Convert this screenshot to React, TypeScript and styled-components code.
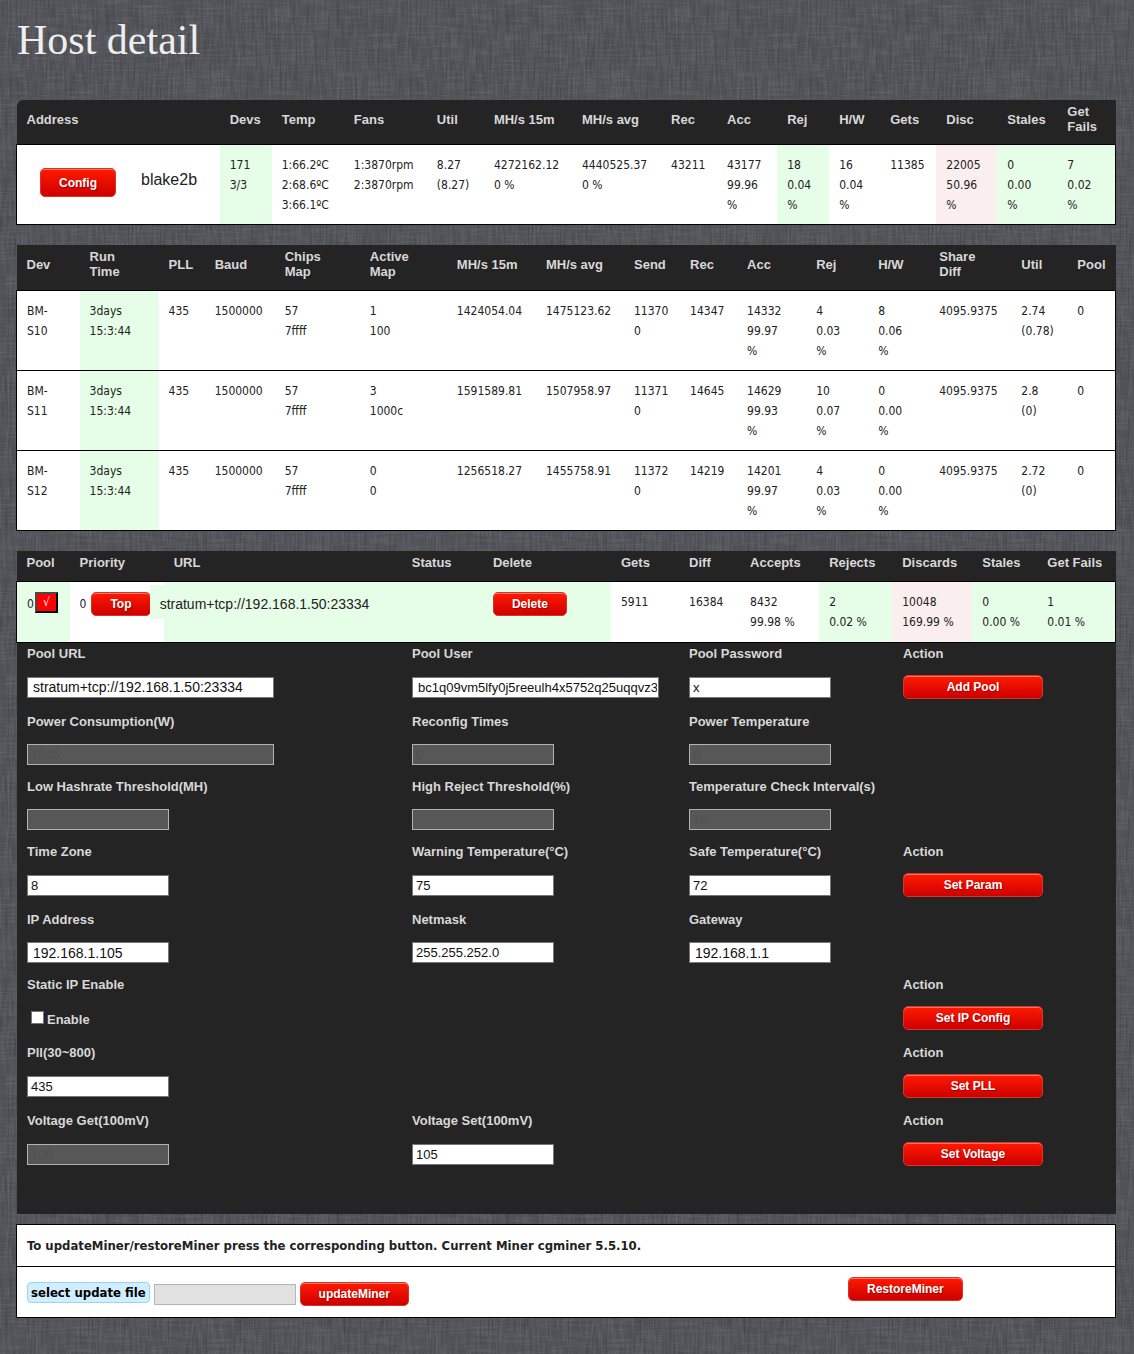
import React from "react";
import styled, { createGlobalStyle } from "styled-components";

const sans = `"Liberation Sans", Arial, sans-serif`;
const text = `"DejaVu Sans Condensed", Tahoma, "DejaVu Sans", sans-serif`;

const linen = encodeURIComponent(
  `<svg xmlns='http://www.w3.org/2000/svg' width='400' height='400'>
    <filter id='h' x='0' y='0' width='100%' height='100%'>
      <feTurbulence type='fractalNoise' baseFrequency='0.03 0.5' numOctaves='3' seed='4' stitchTiles='stitch'/>
      <feColorMatrix values='0 0 0 0 1  0 0 0 0 1  0 0 0 0 1  1.3 0 0 0 -0.55'/>
    </filter>
    <filter id='v' x='0' y='0' width='100%' height='100%'>
      <feTurbulence type='fractalNoise' baseFrequency='0.5 0.03' numOctaves='3' seed='9' stitchTiles='stitch'/>
      <feColorMatrix values='0 0 0 0 0  0 0 0 0 0  0 0 0 0 0  1.6 0 0 0 -0.6'/>
    </filter>
    <filter id='w' x='0' y='0' width='100%' height='100%'>
      <feTurbulence type='fractalNoise' baseFrequency='0.5 0.04' numOctaves='2' seed='21' stitchTiles='stitch'/>
      <feColorMatrix values='0 0 0 0 1  0 0 0 0 1  0 0 0 0 1  1.2 0 0 0 -0.52'/>
    </filter>
    <rect width='400' height='400' fill='#535459'/>
    <rect width='400' height='400' filter='url(#h)' opacity='0.13'/>
    <rect width='400' height='400' filter='url(#v)' opacity='0.22'/>
    <rect width='400' height='400' filter='url(#w)' opacity='0.13'/>
  </svg>`
).replace(/'/g, "%27");

const GlobalStyle = createGlobalStyle`
  *, *::before, *::after { box-sizing: border-box; }
  html { background: #505257 url("data:image/svg+xml,${linen}"); }
  body { margin: 0; font: 12px/20px ${text}; color: #222; }
`;

const Page = styled.main`
  padding: 16px 18px 36px 16px;
`;

const Title = styled.h1`
  margin: 0 0 36px 1px;
  font: 400 42px/48px "Liberation Serif", Georgia, serif;
  color: #eee;
`;

const DataTable = styled.table<{ $rounded?: boolean; $last?: boolean }>`
  width: 100%;
  table-layout: fixed;
  border-collapse: collapse;
  margin-bottom: ${(p) => (p.$last ? 0 : 20)}px;

  th:first-child {
    border-top-left-radius: ${(p) => (p.$rounded ? 6 : 0)}px;
  }
`;

const HeadCell = styled.th<{ $height: number }>`
  height: ${(p) => p.$height}px;
  padding: 4px 10px 10px;
  background: #242424;
  color: #d8d8d8;
  font: 700 13px/15px ${sans};
  text-align: left;
  vertical-align: middle;
  white-space: pre;
`;

type Tone = "white" | "green" | "pink";
const tones: Record<Tone, string> = { white: "#fff", green: "#e6fde7", pink: "#faeeee" };

const Cell = styled.td<{ $tone?: Tone }>`
  height: 80px;
  padding: 10px 10px 9px;
  background: ${(p) => tones[p.$tone ?? "white"]};
  border: solid #000;
  border-width: 1px 0;
  vertical-align: top;
  white-space: pre;

  &:first-child { border-left-width: 1px; }
  &:last-child { border-right-width: 1px; }
`;

const PoolCell = styled(Cell)`
  height: 61px;
`;

const RedButton = styled.button<{ $size?: "wide" | "tall" }>`
  flex: none;
  width: ${(p) => (p.$size === "wide" ? "140px" : "auto")};
  height: ${(p) => (p.$size === "tall" ? 29 : 24)}px;
  padding: 0 18px;
  border: 1px solid #d83526;
  border-radius: 5px;
  background: linear-gradient(#ff1a00, #ce0000);
  box-shadow: inset 0 1px 0 #ff7466;
  color: #fff;
  font: 700 12px/20px ${sans};
  text-shadow: 1px 1px 1px rgba(90, 0, 0, 0.5);
  white-space: nowrap;
  cursor: pointer;
`;

const Address = styled.div`
  display: flex;
  align-items: center;
  gap: 25px;
  padding: 13px 0 0 13px;
`;

const HostName = styled.span`
  padding-bottom: 5px;
  font: 400 16px/20px ${sans};
`;

const InlineGroup = styled.div<{ $gap?: number }>`
  display: flex;
  align-items: center;
  gap: ${(p) => p.$gap ?? 1}px;
  height: 24px;
`;

const CheckButton = styled.button`
  flex: none;
  width: 23px;
  height: 21px;
  margin-bottom: 3px;
  padding: 0;
  border: 2px solid;
  border-color: #4a4a4a #000 #000 #4a4a4a;
  background: #f00;
  color: #fff;
  font: 400 12px/17px ${text};
  cursor: pointer;
`;

const PoolAddress = styled.div`
  position: relative;
  width: 240px;
  margin: -7px 0 0 -24px;
  padding: 9px 10px 5px;
  background: ${tones.green};
  font: 400 14px/20px ${sans};
`;

const Settings = styled.section`
  margin: 0 0 10px 1px;
  padding: 3px 0 33px 10px;
  background: #242424;
`;

const SettingRow = styled.div<{ $tall: boolean }>`
  display: grid;
  grid-template-columns: 385fr 277fr 214fr 213fr;
  padding-bottom: ${(p) => (p.$tall ? 15 : 14)}px;
`;

const Field = styled.div<{ $column?: number; $tall: boolean }>`
  grid-column: ${(p) => p.$column ?? "auto"};
  min-width: 0;
  display: flex;
  flex-direction: column;
  gap: ${(p) => (p.$tall ? 14 : 15)}px;
`;

const FieldLabel = styled.label`
  color: #d8d8d8;
  font: 700 13px/15px ${sans};
  white-space: nowrap;
`;

const ControlBox = styled.div<{ $tall: boolean }>`
  display: flex;
  align-items: center;
  height: ${(p) => (p.$tall ? 24 : 21)}px;
`;

const TextBox = styled.input<{ $wide?: boolean; $indent?: boolean; $large?: boolean }>`
  width: ${(p) => (p.$wide ? 247 : 142)}px;
  height: 21px;
  padding: 0 1px 0 ${(p) => (p.$indent ? 5 : 3)}px;
  border: 1px solid #767676;
  border-radius: 0;
  background: #fff;
  color: #111;
  font: 400 ${(p) => (p.$large ? 14 : 13)}px/19px ${sans};

  &:disabled {
    border-color: #b2b2b2;
    background: #575757;
    color: #505050;
    opacity: 1;
  }
`;

const Tick = styled.label`
  display: flex;
  align-items: center;
  gap: 3px;
  padding: 3px 0 0 4px;
  color: #d8d8d8;
  font: 700 13px/15px ${sans};
`;

const TickBox = styled.input`
  appearance: none;
  width: 13px;
  height: 13px;
  margin: 0 0 4px;
  border: 1px solid #767676;
  background: #fff;

  &:checked { background: #c00; }
`;

const Update = styled.section`
  border: 1px solid #000;
  background: #fff;
`;

const Notice = styled.p`
  margin: 0;
  padding: 11px 10px 10px;
  border-bottom: 1px solid #000;
  font-size: 13px;
  font-weight: 700;
`;

const UpdateRow = styled.div`
  display: grid;
  grid-template-columns: 821fr 267fr;
  align-items: start;
  height: 50px;
  padding: 10px 0 0 10px;
`;

const UpdateControls = styled.div`
  display: flex;
  align-items: center;
  gap: 4px;
  padding-top: 5px;
`;

const FilePicker = styled.label`
  flex: none;
  height: 21px;
  margin-bottom: 3px;
  padding: 0 3px;
  border: 1px solid #99d3f5;
  border-radius: 4px;
  background: #d0eeff;
  color: #000;
  font: 700 13px/19px ${text};
  cursor: pointer;
`;

const HiddenFile = styled.input`
  position: absolute;
  width: 1px;
  height: 1px;
  opacity: 0;
`;

const FileName = styled(TextBox)`
  &:disabled {
    border-color: #b5b5b5;
    background: #e1e1e1;
  }
`;

type Column = [title: string, width: number, tone?: Tone];

const hostColumns: Column[] = [
  ["Address", 203], ["Devs", 52, "green"], ["Temp", 72], ["Fans", 83], ["Util", 57],
  ["MH/s 15m", 88], ["MH/s avg", 89], ["Rec", 56], ["Acc", 60], ["Rej", 52, "green"],
  ["H/W", 51], ["Gets", 56], ["Disc", 61, "pink"], ["Stales", 60, "green"], ["Get\nFails", 58, "green"],
];

const hostValues = [
  "171\n3/3", "1:66.2ºC\n2:68.6ºC\n3:66.1ºC", "1:3870rpm\n2:3870rpm", "8.27\n(8.27)",
  "4272162.12\n0 %", "4440525.37\n0 %", "43211", "43177\n99.96\n%", "18\n0.04\n%",
  "16\n0.04\n%", "11385", "22005\n50.96\n%", "0\n0.00\n%", "7\n0.02\n%",
];

const devColumns: Column[] = [
  ["Dev", 63], ["Run\nTime", 79, "green"], ["PLL", 46], ["Baud", 70], ["Chips\nMap", 85],
  ["Active\nMap", 87], ["MH/s 15m", 89], ["MH/s avg", 88], ["Send", 56], ["Rec", 57],
  ["Acc", 69], ["Rej", 62], ["H/W", 61], ["Share\nDiff", 82], ["Util", 56], ["Pool", 48],
];

const devRows = [
  ["BM-\nS10", "3days\n15:3:44", "435", "1500000", "57\n7ffff", "1\n100", "1424054.04", "1475123.62",
    "11370\n0", "14347", "14332\n99.97\n%", "4\n0.03\n%", "8\n0.06\n%", "4095.9375", "2.74\n(0.78)", "0"],
  ["BM-\nS11", "3days\n15:3:44", "435", "1500000", "57\n7ffff", "3\n1000c", "1591589.81", "1507958.97",
    "11371\n0", "14645", "14629\n99.93\n%", "10\n0.07\n%", "0\n0.00\n%", "4095.9375", "2.8\n(0)", "0"],
  ["BM-\nS12", "3days\n15:3:44", "435", "1500000", "57\n7ffff", "0\n0", "1256518.27", "1455758.91",
    "11372\n0", "14219", "14201\n99.97\n%", "4\n0.03\n%", "0\n0.00\n%", "4095.9375", "2.72\n(0)", "0"],
];

const poolColumns: Column[] = [
  ["Pool", 53, "green"], ["Priority", 94], ["URL", 238, "green"], ["Status", 81, "green"],
  ["Delete", 128, "green"], ["Gets", 68], ["Diff", 61], ["Accepts", 79], ["Rejects", 73, "green"],
  ["Discards", 80, "pink"], ["Stales", 65, "green"], ["Get Fails", 78, "green"],
];

const poolValues = ["5911", "16384", "8432\n99.98 %", "2\n0.02 %", "10048\n169.99 %", "0\n0.00 %", "1\n0.01 %"];

interface Setting {
  label: string;
  value?: string;
  wide?: boolean;
  indent?: boolean;
  large?: boolean;
  disabled?: boolean;
  checkbox?: boolean;
}

const settings: { fields: Setting[]; action?: string }[] = [
  {
    fields: [
      { label: "Pool URL", value: "stratum+tcp://192.168.1.50:23334", wide: true, indent: true, large: true },
      { label: "Pool User", value: "bc1q09vm5lfy0j5reeulh4x5752q25uqqvz3", wide: true, indent: true },
      { label: "Pool Password", value: "x" },
    ],
    action: "Add Pool",
  },
  {
    fields: [
      { label: "Power Consumption(W)", value: "1245", wide: true, disabled: true },
      { label: "Reconfig Times", value: "0", disabled: true },
      { label: "Power Temperature", value: "0", disabled: true },
    ],
  },
  {
    fields: [
      { label: "Low Hashrate Threshold(MH)", disabled: true },
      { label: "High Reject Threshold(%)", disabled: true },
      { label: "Temperature Check Interval(s)", value: "10", disabled: true },
    ],
  },
  {
    fields: [
      { label: "Time Zone", value: "8" },
      { label: "Warning Temperature(°C)", value: "75" },
      { label: "Safe Temperature(°C)", value: "72" },
    ],
    action: "Set Param",
  },
  {
    fields: [
      { label: "IP Address", value: "192.168.1.105", indent: true, large: true },
      { label: "Netmask", value: "255.255.252.0" },
      { label: "Gateway", value: "192.168.1.1", indent: true, large: true },
    ],
  },
  { fields: [{ label: "Static IP Enable", checkbox: true }], action: "Set IP Config" },
  { fields: [{ label: "Pll(30~800)", value: "435" }], action: "Set PLL" },
  {
    fields: [
      { label: "Voltage Get(100mV)", value: "109", disabled: true },
      { label: "Voltage Set(100mV)", value: "105" },
    ],
    action: "Set Voltage",
  },
];

function Head({ columns, height }: { columns: Column[]; height: number }) {
  return (
    <>
      <colgroup>
        {columns.map(([title, width]) => (
          <col key={title} width={width} />
        ))}
      </colgroup>
      <thead>
        <tr>
          {columns.map(([title]) => (
            <HeadCell key={title} scope="col" $height={height}>{title}</HeadCell>
          ))}
        </tr>
      </thead>
    </>
  );
}

function SettingField({ setting, id, tall }: { setting: Setting; id: string; tall: boolean }) {
  return (
    <Field $tall={tall}>
      <FieldLabel as={setting.checkbox ? "span" : "label"} htmlFor={setting.checkbox ? undefined : id}>
        {setting.label}
      </FieldLabel>
      <ControlBox $tall={tall}>
        {setting.checkbox ? (
          <Tick>
            <TickBox type="checkbox" />
            Enable
          </Tick>
        ) : (
          <TextBox
            id={id}
            defaultValue={setting.value}
            disabled={setting.disabled}
            $wide={setting.wide}
            $indent={setting.indent}
            $large={setting.large}
          />
        )}
      </ControlBox>
    </Field>
  );
}

export default function App() {
  return (
    <>
      <GlobalStyle />
      <Page>
        <Title>Host detail</Title>

        <DataTable $rounded>
          <Head columns={hostColumns} height={44} />
          <tbody>
            <tr>
              <Cell>
                <Address>
                  <RedButton $size="tall">Config</RedButton>
                  <HostName>blake2b</HostName>
                </Address>
              </Cell>
              {hostValues.map((value, i) => (
                <Cell key={i} $tone={hostColumns[i + 1][2]}>{value}</Cell>
              ))}
            </tr>
          </tbody>
        </DataTable>

        <DataTable>
          <Head columns={devColumns} height={45} />
          <tbody>
            {devRows.map((row) => (
              <tr key={row[0]}>
                {row.map((value, i) => (
                  <Cell key={i} $tone={devColumns[i][2]}>{value}</Cell>
                ))}
              </tr>
            ))}
          </tbody>
        </DataTable>

        <DataTable $last>
          <Head columns={poolColumns} height={31} />
          <tbody>
            <tr>
              <PoolCell $tone="green">
                <InlineGroup>
                  0<CheckButton>√</CheckButton>
                </InlineGroup>
              </PoolCell>
              <PoolCell>
                <InlineGroup $gap={5}>
                  0<RedButton>Top</RedButton>
                </InlineGroup>
              </PoolCell>
              <PoolCell $tone="green">
                <PoolAddress>stratum+tcp://192.168.1.50:23334</PoolAddress>
              </PoolCell>
              <PoolCell $tone="green" />
              <PoolCell $tone="green">
                <InlineGroup>
                  <RedButton>Delete</RedButton>
                </InlineGroup>
              </PoolCell>
              {poolValues.map((value, i) => (
                <PoolCell key={i} $tone={poolColumns[i + 5][2]}>{value}</PoolCell>
              ))}
            </tr>
          </tbody>
        </DataTable>

        <Settings>
          {settings.map((row, r) => (
            <SettingRow key={r} $tall={!!row.action}>
              {row.fields.map((setting, f) => (
                <SettingField key={f} id={`setting-${r}-${f}`} setting={setting} tall={!!row.action} />
              ))}
              {row.action && (
                <Field $column={4} $tall>
                  <FieldLabel as="span">Action</FieldLabel>
                  <ControlBox $tall>
                    <RedButton $size="wide">{row.action}</RedButton>
                  </ControlBox>
                </Field>
              )}
            </SettingRow>
          ))}
        </Settings>

        <Update>
          <Notice>To updateMiner/restoreMiner press the corresponding button. Current Miner cgminer 5.5.10.</Notice>
          <UpdateRow>
            <UpdateControls>
              <FilePicker>
                select update file
                <HiddenFile type="file" />
              </FilePicker>
              <FileName aria-label="Update file name" disabled />
              <RedButton>updateMiner</RedButton>
            </UpdateControls>
            <div>
              <RedButton>RestoreMiner</RedButton>
            </div>
          </UpdateRow>
        </Update>
      </Page>
    </>
  );
}
